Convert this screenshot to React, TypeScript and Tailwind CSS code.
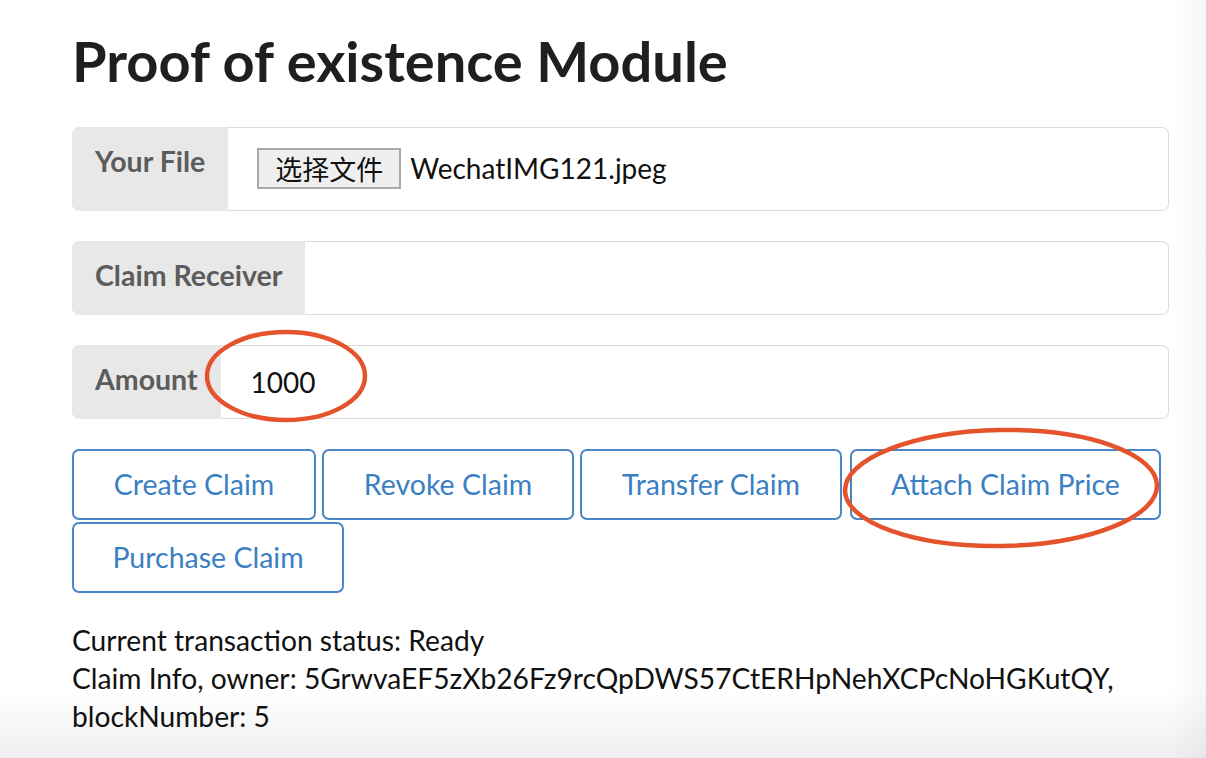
import React from "react";

const lato = { fontFamily: "Lato, 'Noto Sans', sans-serif" };

function Label({ children }: { children: React.ReactNode }) {
  return (
    <div className="flex shrink-0 items-start rounded-l-[7px] bg-[#e8e8e8] px-[23px] pt-[17px] text-[28.5px] font-bold leading-[34px] text-[#5c5c5c]">
      {children}
    </div>
  );
}

function Btn({ children, w }: { children: React.ReactNode; w: string }) {
  return (
    <button
      className={`flex h-[71px] items-center justify-center rounded-[7px] border-2 border-[#4a86c5] bg-white text-[28.5px] leading-none text-[#3a7fc4] ${w}`}
    >
      {children}
    </button>
  );
}

export default function App() {
  return (
    <div
      className="relative h-[758px] w-[1206px] overflow-hidden bg-[linear-gradient(to_right,rgba(255,255,255,0)_97%,rgba(0,0,0,0.035)),linear-gradient(to_bottom,#ffffff_91%,#efefef)] text-[#1b1c1d]"
      style={lato}
    >
      <div className="flex flex-col pl-[72px] pt-[25px]" style={{ width: 1169 }}>
        <h1 className="text-[56px] font-bold leading-[72px] text-[#1f1f1f]">Proof of existence Module</h1>

        <div className="mt-[30px] flex h-[84px]">
          <Label>Your File</Label>
          <div className="flex flex-1 items-start rounded-r-[7px] border border-l-0 border-[#dcdcdc] pl-[29px] pt-[20px]">
            <div
              className="flex h-[41px] w-[144px] items-center justify-center border-2 border-[#a9a9a9] bg-[#efefef] text-[27px] leading-none text-[#111]"
              style={{ fontFamily: "'Noto Sans CJK SC', sans-serif" }}
            >
              选择文件
            </div>
            <span className="ml-[9px] mt-[2px] text-[28px] leading-[36px] text-[#111]">WechatIMG121.jpeg</span>
          </div>
        </div>

        <div className="mt-[30px] flex h-[74px]">
          <Label>Claim Receiver</Label>
          <div className="flex-1 rounded-r-[7px] border border-l-0 border-[#dcdcdc]" />
        </div>

        <div className="mt-[30px] flex h-[74px]">
          <Label>Amount</Label>
          <div className="flex flex-1 items-center rounded-r-[7px] border border-l-0 border-[#dcdcdc] pl-[30px] text-[28px] text-[#111]">
            1000
          </div>
        </div>

        <div className="mt-[30px] flex flex-wrap gap-x-[6px] gap-y-[2px]">
          <Btn w="w-[244px]">Create Claim</Btn>
          <Btn w="w-[252px]">Revoke Claim</Btn>
          <Btn w="w-[262px]">Transfer Claim</Btn>
          <Btn w="ml-[2px] w-[311px]">Attach Claim Price</Btn>
          <Btn w="w-[272px]">Purchase Claim</Btn>
        </div>

        <div className="mt-[28px] text-[28.2px] leading-[38px] text-[#111]">
          <div>Current transaction status: Ready</div>
          <div>Claim Info, owner: 5GrwvaEF5zXb26Fz9rcQpDWS57CtERHpNehXCPcNoHGKutQY,</div>
          <div>blockNumber: 5</div>
        </div>
      </div>

      <svg className="pointer-events-none absolute left-0 top-0" width="1206" height="758">
        <ellipse cx="286" cy="376" rx="79" ry="44" fill="none" stroke="#e5532d" strokeWidth="4.5" />
        <ellipse cx="1001" cy="488" rx="156" ry="58" fill="none" stroke="#e5532d" strokeWidth="4.5" transform="rotate(-1 1001 488)" />
      </svg>
    </div>
  );
}
